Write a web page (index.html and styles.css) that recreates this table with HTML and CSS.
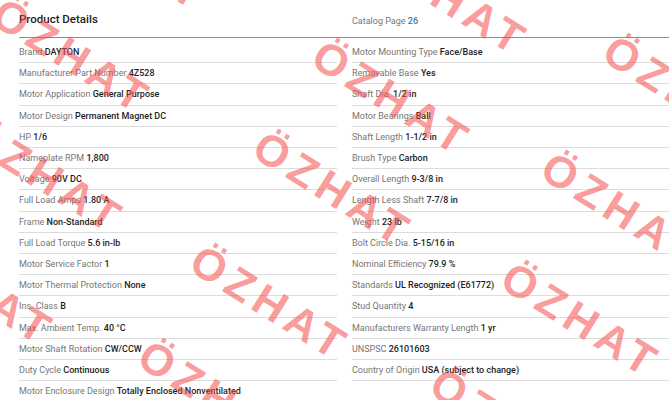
FILE: index.html
```html
<!DOCTYPE html>
<html lang="en">
<head>
    <meta charset="UTF-8">
    <meta name="viewport" content="width=device-width, initial-scale=1.0">
    <title>Product Details</title>
    <link rel="stylesheet" href="styles.css">
</head>
<body>
    <div class="sheet">
        <div class="head">
            <h2 class="title">Product Details</h2>
            <div class="catalog">Catalog Page <a href="#">26</a></div>
        </div>

        <div class="cols">
            <ul class="specs">
                <li>Brand <b>DAYTON</b></li>
                <li>Manufacturer Part Number <b>4Z528</b></li>
                <li>Motor Application <b>General Purpose</b></li>
                <li>Motor Design <b>Permanent Magnet DC</b></li>
                <li>HP <b>1/6</b></li>
                <li>Nameplate RPM <b>1,800</b></li>
                <li>Voltage <b>90V DC</b></li>
                <li>Full Load Amps <b>1.80 A</b></li>
                <li>Frame <b>Non-Standard</b></li>
                <li>Full Load Torque <b>5.6 in-lb</b></li>
                <li>Motor Service Factor <b>1</b></li>
                <li>Motor Thermal Protection <b>None</b></li>
                <li>Ins. Class <b>B</b></li>
                <li>Max. Ambient Temp. <b>40 °C</b></li>
                <li>Motor Shaft Rotation <b>CW/CCW</b></li>
                <li>Duty Cycle <b>Continuous</b></li>
                <li>Motor Enclosure Design <b>Totally Enclosed Nonventilated</b></li>
            </ul>
            <ul class="specs">
                <li>Motor Mounting Type <b>Face/Base</b></li>
                <li>Removable Base <b>Yes</b></li>
                <li>Shaft Dia. <b>1/2 in</b></li>
                <li>Motor Bearings <b>Ball</b></li>
                <li>Shaft Length <b>1-1/2 in</b></li>
                <li>Brush Type <b>Carbon</b></li>
                <li>Overall Length <b>9-3/8 in</b></li>
                <li>Length Less Shaft <b>7-7/8 in</b></li>
                <li>Weight <b>23 lb</b></li>
                <li>Bolt Circle Dia. <b>5-15/16 in</b></li>
                <li>Nominal Efficiency <b>79.9 %</b></li>
                <li>Standards <b>UL Recognized (E61772)</b></li>
                <li>Stud Quantity <b>4</b></li>
                <li>Manufacturers Warranty Length <b>1 yr</b></li>
                <li>UNSPSC <b>26101603</b></li>
                <li>Country of Origin <b>USA (subject to change)</b></li>
            </ul>
        </div>
    </div>

    <!-- watermark -->
    <div class="marks" aria-hidden="true">
        <span class="mark" style="left:67px;top:-115px">ÖZHAT</span>
        <span class="mark" style="left:387px;top:-70px">ÖZHAT</span>
        <span class="mark" style="left:10px;top:-12px">ÖZHAT</span>
        <span class="mark" style="left:330px;top:30px">ÖZHAT</span>
        <span class="mark" style="left:621px;top:25px">ÖZHAT</span>
        <span class="mark" style="left:-17px;top:108px">ÖZHAT</span>
        <span class="mark" style="left:271px;top:121px">ÖZHAT</span>
        <span class="mark" style="left:559px;top:142px">ÖZHAT</span>
        <span class="mark" style="left:-87px;top:220px">ÖZHAT</span>
        <span class="mark" style="left:208px;top:235px">ÖZHAT</span>
        <span class="mark" style="left:519px;top:252px">ÖZHAT</span>
        <span class="mark" style="left:156px;top:330px">ÖZHAT</span>
        <span class="mark" style="left:448px;top:358px">ÖZHAT</span>
    </div>
</body>
</html>
```

FILE: styles.css
```css
html, body {
    margin: 0;
    padding: 0;
    height: 100%;
    overflow: hidden;
    background-color: #fff;
}

body {
    font-family: Roboto, "Liberation Sans", Arial, sans-serif;
    font-size: 9px;
    color: #767676;
    position: relative;
}

.sheet {
    padding-left: 19px;
}

.head {
    display: grid;
    grid-template-columns: 318px 318px;
    column-gap: 15px;
    height: 37px;
    border-bottom: 1px solid #8c8c8c;
}

.title {
    margin: 0;
    padding-top: 12px;
    font-size: 11.5px;
    line-height: 14px;
    font-weight: 500;
    color: #222;
}

.catalog {
    padding-top: 14px;
    line-height: 14px;
}

.catalog a {
    color: #2b7bb9;
    font-weight: 500;
    text-decoration: none;
}

.cols {
    display: grid;
    grid-template-columns: 318px 318px;
    column-gap: 15px;
}

.specs {
    list-style: none;
    margin: 0;
    padding: 4px 0 0;
}

.specs li {
    line-height: 20.2px;
    border-bottom: 1px solid #dcdcdc;
    white-space: nowrap;
}

.specs b {
    font-weight: 500;
    color: #1e1e24;
}

.marks {
    position: absolute;
    inset: 0;
    pointer-events: none;
}

.mark {
    position: absolute;
    font-family: "Liberation Sans", Arial, sans-serif;
    font-weight: bold;
    font-size: 44px;
    letter-spacing: 6px;
    line-height: normal;
    color: rgba(245, 72, 72, 0.55);
    transform: rotate(32deg);
    transform-origin: 0 0;
    white-space: nowrap;
}
```
